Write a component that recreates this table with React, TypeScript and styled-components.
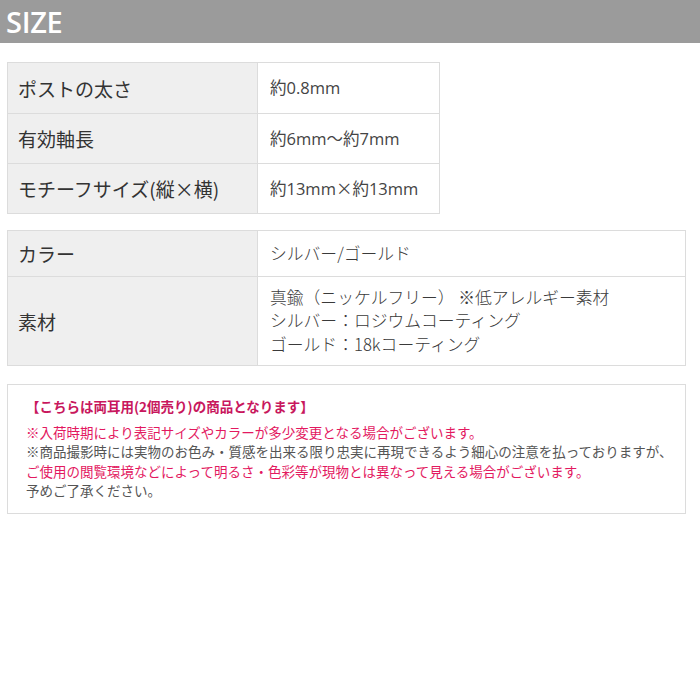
import styled, { createGlobalStyle } from 'styled-components';

const GlobalStyle = createGlobalStyle`
    body {
        margin: 0;
        background: #fff;
        font-family: "Noto Sans CJK JP", "Noto Sans", sans-serif;
        color: #333;
    }
`;

const Cjk = styled.span`
    font-family: "Noto Sans CJK JP", sans-serif;
`;

const App = () => {
    const sizeRows = [
        { label: 'ポストの太さ', value: <>約0.8mm</>, height: 51 },
        { label: '有効軸長', value: <>約6mm〜約7mm</>, height: 50 },
        { label: 'モチーフサイズ(縦×横)', value: <>約13mm<Cjk>×</Cjk>約13mm</>, height: 50 },
    ];

    return (
        <Page>
            <GlobalStyle />
            <Header>SIZE</Header>
            <Body>
                <SpecTable $width={433}>
                    <tbody>
                        {sizeRows.map(row => (
                            <tr key={row.label}>
                                <Label $height={row.height}>{row.label}</Label>
                                <Value>{row.value}</Value>
                            </tr>
                        ))}
                    </tbody>
                </SpecTable>

                <SpecTable $width={679}>
                    <tbody>
                        <tr>
                            <Label $height={46}>カラー</Label>
                            <Value $light>シルバー/ゴールド</Value>
                        </tr>
                        <tr>
                            <Label $height={89}>素材</Label>
                            <Value $light>
                                真鍮（ニッケルフリー） ※低アレルギー素材<br />
                                シルバー：ロジウムコーティング<br />
                                ゴールド：18kコーティング
                            </Value>
                        </tr>
                    </tbody>
                </SpecTable>

                <NoteBox>
                    <NoteTitle>【こちらは両耳用(2個売り)の商品となります】</NoteTitle>
                    <NoteLine $accent>※入荷時期により表記サイズやカラーが多少変更となる場合がございます。</NoteLine>
                    <NoteLine>※商品撮影時には実物のお色み・質感を出来る限り忠実に再現できるよう細心の注意を払っておりますが、</NoteLine>
                    <NoteLine $accent>ご使用の閲覧環境などによって明るさ・色彩等が現物とは異なって見える場合がございます。</NoteLine>
                    <NoteLine>予めご了承ください。</NoteLine>
                </NoteBox>
            </Body>
        </Page>
    );
}

export default App;

const Page = styled.div`
    width: 700px;
    height: 700px;
    background: #fff;
`;

const Header = styled.div`
    height: 43px;
    background: #9b9b9b;
    color: #fff;
    font-family: "Open Sans", sans-serif;
    font-weight: 600;
    font-size: 29px;
    line-height: 43px;
    padding-left: 6px;
    letter-spacing: -0.3px;
`;

const Body = styled.div`
    display: flex;
    flex-direction: column;
    gap: 16px;
    padding: 19px 0 0 7px;
`;

const SpecTable = styled.table<{ $width: number }>`
    width: ${props => props.$width}px;
    border-collapse: collapse;
    border: 1px solid #dcdcdc;
`;

const Label = styled.th<{ $height: number }>`
    width: 250px;
    height: ${props => props.$height}px;
    box-sizing: border-box;
    background: #efefef;
    border: 1px solid #dcdcdc;
    padding: 0 0 0 10px;
    text-align: left;
    font-weight: 400;
    font-size: 19px;
    color: #333;
`;

const Value = styled.td<{ $light?: boolean }>`
    border: 1px solid #dcdcdc;
    padding: 0 0 0 12px;
    font-family: ${props => props.$light
        ? '"Noto Sans CJK JP", sans-serif'
        : '"Open Sans", "Noto Sans CJK JP", sans-serif'};
    font-size: ${props => props.$light ? '16.8px' : '16.5px'};
    line-height: 23.5px;
    color: ${props => props.$light ? '#3a3a3a' : '#444'};
    font-weight: ${props => props.$light ? 300 : 400};
`;

const NoteBox = styled.div`
    width: 679px;
    box-sizing: border-box;
    margin-top: 2px;
    border: 1px solid #dcdcdc;
    padding: 12px 0 12px 18px;
    font-size: 13.5px;
    line-height: 19.5px;
`;

const NoteTitle = styled.div`
    color: #c8175d;
    font-weight: 700;
    margin-bottom: 6px;
`;

const NoteLine = styled.div<{ $accent?: boolean }>`
    color: ${props => props.$accent ? '#e3195f' : '#555'};
    white-space: nowrap;
`;
